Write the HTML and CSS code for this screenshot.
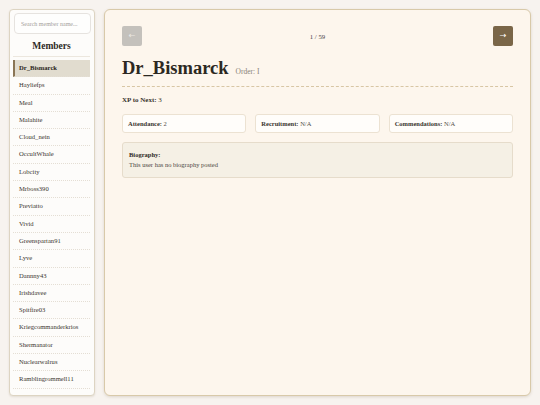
FILE: index.html
```html
<!DOCTYPE html>
<html>
<head>
<meta charset="utf-8">
<link rel="stylesheet" href="styles.css">
</head>
<body>
<div class="layout">
  <aside class="sidebar">
    <input class="search" type="text" placeholder="Search member name...">
    <h2 class="members-title">Members</h2>
    <ul class="member-list">
      <li class="member active">Dr_Bismarck</li>
      <li class="member">Hayliefps</li>
      <li class="member">Meal</li>
      <li class="member">Malahite</li>
      <li class="member">Cloud_nein</li>
      <li class="member">OccultWhale</li>
      <li class="member">Lobcity</li>
      <li class="member">Mrboss390</li>
      <li class="member">Previatto</li>
      <li class="member">Vivid</li>
      <li class="member">Greenspartan91</li>
      <li class="member">Lyve</li>
      <li class="member">Dannny43</li>
      <li class="member">Irishdavee</li>
      <li class="member">Spitfire03</li>
      <li class="member">Kriegcommanderkrios</li>
      <li class="member">Shermanator</li>
      <li class="member">Nuclearwalrus</li>
      <li class="member">Ramblingrommell11</li>
      <li class="member">R_Ferro</li>
    </ul>
  </aside>
  <main class="panel">
    <div class="nav">
      <button class="nav-btn prev">&larr;</button>
      <span class="counter">1 / 59</span>
      <button class="nav-btn next">&rarr;</button>
    </div>
    <div class="title-row">
      <h1 class="name">Dr_Bismarck</h1>
      <span class="order">Order: I</span>
    </div>
    <p class="xp"><b>XP to Next:</b> 3</p>
    <div class="stats">
      <div class="stat"><b>Attendance:</b> 2</div>
      <div class="stat"><b>Recruitment:</b> N/A</div>
      <div class="stat"><b>Commendations:</b> N/A</div>
    </div>
    <div class="bio">
      <div class="bio-label">Biography:</div>
      <div class="bio-text">This user has no biography posted</div>
    </div>
  </main>
</div>
</body>
</html>
```
FILE: styles.css
```css
* { box-sizing: border-box; }
html, body {
  margin: 0;
  padding: 0;
  height: 405px;
  overflow: hidden;
}
body {
  background: #f7f3ef;
  font-family: "Liberation Serif", "DejaVu Serif", serif;
  color: #2e2a25;
}
.layout {
  display: flex;
  gap: 9px;
  padding: 9px;
  height: 405px;
}
.sidebar {
  width: 86px;
  flex: none;
  background: #fdfcfa;
  border: 1px solid #ddd4c2;
  border-radius: 4px;
  box-shadow: 0 1px 2px rgba(120, 100, 70, 0.15);
  padding: 3px 4px 0 3px;
  display: flex;
  flex-direction: column;
  overflow: hidden;
}
.sidebar > * { flex-shrink: 0; }
.search {
  margin: 0 0 0 1px;
  width: 77px;
  height: 21px;
  border: 1px solid #e6e3df;
  border-radius: 4px;
  background: #fefefd;
  font-family: "Liberation Serif", serif;
  font-size: 6px;
  padding: 0 6px;
  color: #999;
  outline: none;
}
.search::placeholder { color: #a4a09b; }
.members-title {
  margin: 6px 0 0;
  padding: 0 0 4px;
  text-align: center;
  font-size: 9.5px;
  line-height: 12px;
  font-weight: bold;
  color: #2e2a25;
  border-bottom: 1px solid #ece7de;
}
.member-list {
  list-style: none;
  margin: 3px 0 0;
  padding: 0;
}
.member {
  height: 17.3px;
  line-height: 16px;
  padding-left: 6px;
  font-size: 6.6px;
  color: #3a352f;
  border-bottom: 1px dotted #e4ded4;
}
.member.active {
  background: #e1dccf;
  border-left: 2px solid #8a7555;
  padding-left: 4px;
  font-weight: bold;
  color: #2a2520;
}
.panel {
  flex: 1;
  background: #fdf6ed;
  border: 1px solid #d8c9a9;
  border-radius: 6px;
  box-shadow: 0 1px 3px rgba(120, 100, 70, 0.2);
  padding: 16px 17px;
}
.nav {
  display: flex;
  justify-content: space-between;
  align-items: center;
  height: 20px;
}
.nav-btn {
  width: 20px;
  height: 20px;
  border: none;
  border-radius: 2px;
  color: #fff;
  font-size: 8px;
  padding: 0;
  font-family: "DejaVu Sans", sans-serif;
  line-height: 20px;
}
.prev { background: #c4c1bc; color: #ece9e4; }
.next { background: #7a6648; }
.counter {
  font-size: 6.8px;
  color: #4a453f;
}
.title-row {
  display: flex;
  align-items: baseline;
  gap: 7px;
  margin-top: 11px;
  padding-bottom: 6px;
  border-bottom: 1px dashed #d8c6a4;
}
.name {
  margin: 0;
  font-size: 18.5px;
  line-height: 23px;
  font-weight: bold;
  color: #2c2822;
}
.order {
  font-size: 7.5px;
  color: #8a8378;
}
.xp {
  margin: 9px 0 0;
  font-size: 7px;
  line-height: 9px;
  color: #3a352f;
}
.stats {
  display: grid;
  grid-template-columns: 1fr 1fr 1fr;
  gap: 9px;
  margin-top: 9px;
}
.stat {
  height: 19px;
  line-height: 17px;
  padding: 0 5px;
  background: #fffdfa;
  border: 1px solid #ece2d2;
  border-radius: 3px;
  font-size: 6.5px;
  color: #55504a;
}
.stat b { color: #3a352f; }
.bio {
  margin-top: 9px;
  height: 36px;
  background: #f5f0e5;
  border: 1px solid #e6dccb;
  border-radius: 3px;
  padding: 7px 6px;
  font-size: 6.5px;
  line-height: 10px;
}
.bio-label { font-weight: bold; color: #2e2a25; }
.bio-text { color: #4a453f; }
```
